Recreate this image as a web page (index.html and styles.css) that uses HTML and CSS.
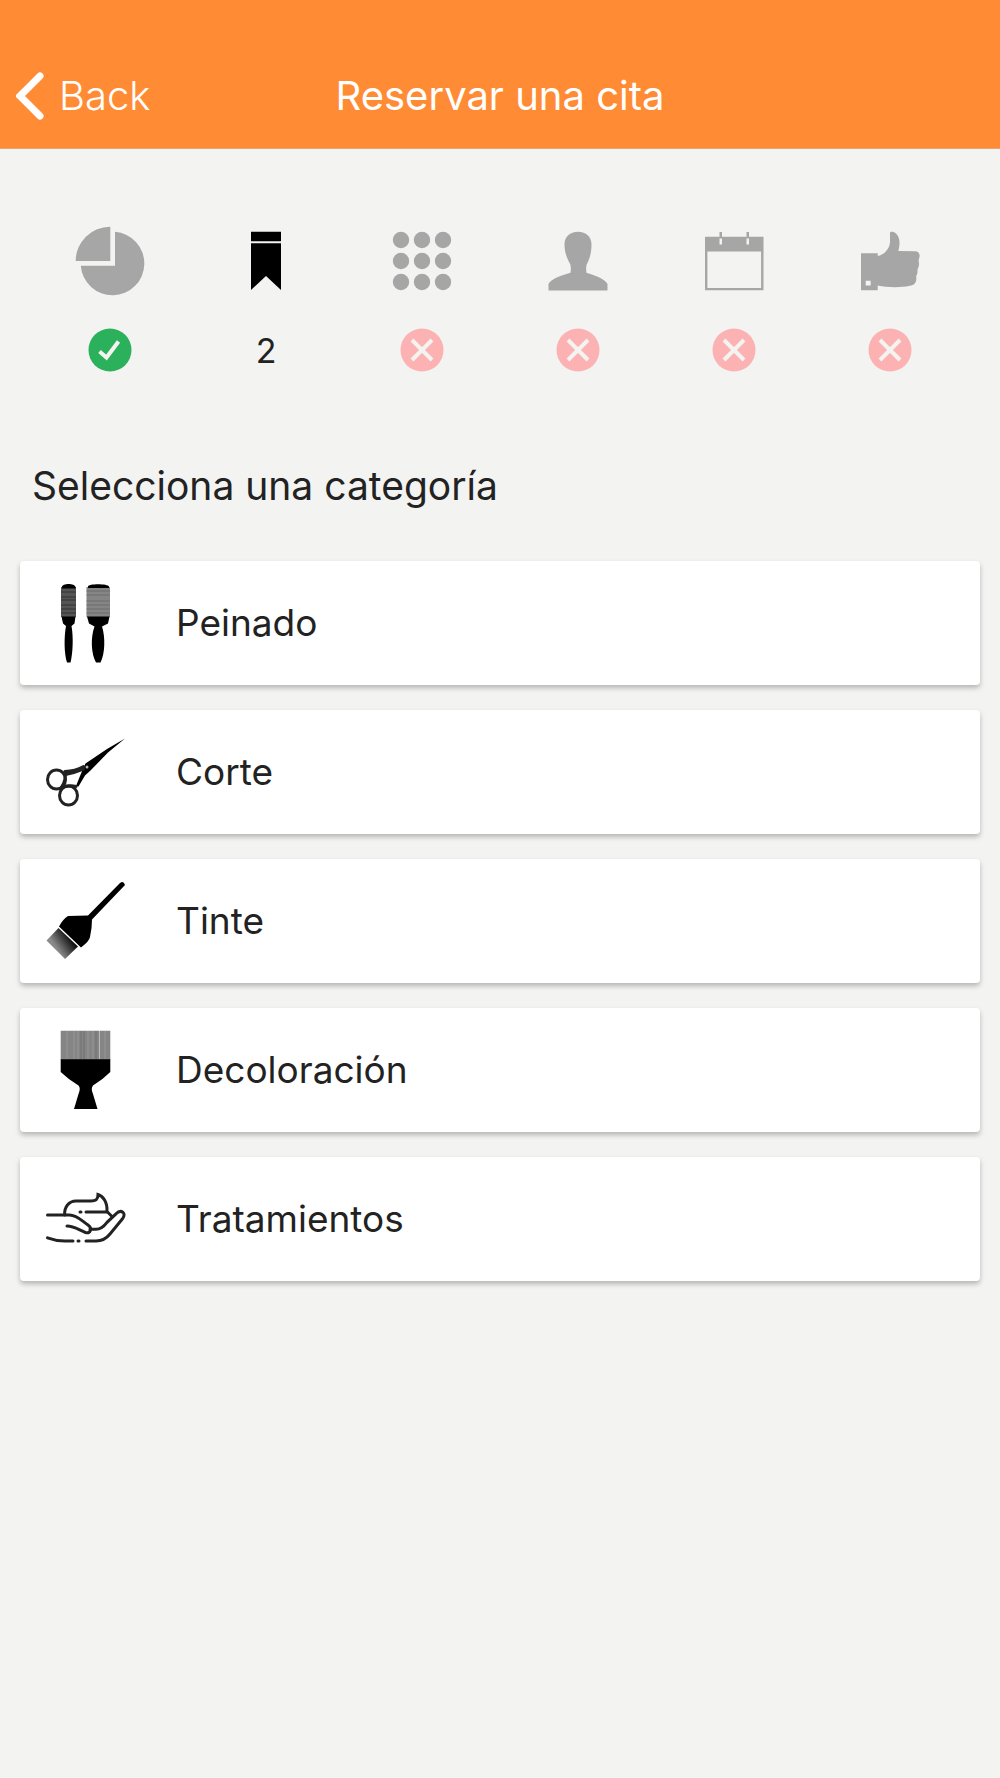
FILE: index.html
```
<!DOCTYPE html>
<html lang="es">
<head>
  <meta charset="UTF-8">
  <meta name="viewport" content="width=device-width, initial-scale=1.0">
  <title>Reservar una cita</title>
  <link rel="stylesheet" href="styles.css">
</head>
<body>
  <header class="header">
    <button class="back-button" type="button">
      <svg class="back-icon" viewBox="0 0 28 48" aria-hidden="true"><path d="M24 4 4 24l20 20"/></svg>
      Back
    </button>
    <h1>Reservar una cita</h1>
  </header>

  <main>
    <!-- Booking steps -->
    <ol class="steps">
      <li class="step">
        <svg class="step-icon" viewBox="0 0 70 70" aria-hidden="true">
          <path d="M35.300 35V.7A34.300 34.300 0 0 0 .7 35z"/>
          <path d="M40 5.800A31.800 31.800 0 1 1 5.800 39.700H40z"/>
        </svg>
        <svg class="badge badge-done" viewBox="0 0 44 44" role="img" aria-label="Completado">
          <circle cx="22" cy="22" r="21.500"/>
          <path d="M11.500 23.500 18.500 29.500 30.500 13.500"/>
        </svg>
      </li>
      <li class="step active" aria-current="step">
        <svg class="step-icon" viewBox="0 0 70 70" aria-hidden="true">
          <path d="M20 5.700h30v9.600H20zM20 17.300h30V64L35 50 20 64z"/>
        </svg>
        <span class="step-number">2</span>
      </li>
      <li class="step">
        <svg class="step-icon" viewBox="0 0 70 70" aria-hidden="true">
          <circle cx="14" cy="14" r="8.200"/><circle cx="35" cy="14" r="8.200"/><circle cx="56" cy="14" r="8.200"/>
          <circle cx="14" cy="35" r="8.200"/><circle cx="35" cy="35" r="8.200"/><circle cx="56" cy="35" r="8.200"/>
          <circle cx="14" cy="56" r="8.200"/><circle cx="35" cy="56" r="8.200"/><circle cx="56" cy="56" r="8.200"/>
        </svg>
        <svg class="badge badge-pending" viewBox="0 0 44 44" role="img" aria-label="Pendiente">
          <circle cx="22" cy="22" r="21.500"/>
          <path d="M12 12l20 20M32 12l-20 20"/>
        </svg>
      </li>
      <li class="step">
        <svg class="step-icon" viewBox="0 0 70 70" aria-hidden="true">
          <path d="M35 5.700c8 0 13.500 5 13.500 12.500 0 9-2 15-4.500 19.500-1 2-1 6.500-.5 9C54 50 62 53 64.500 58v6.500h-59V58C8 53 16 50 27.500 46.700c.5-2.500.5-7-.5-9-2.500-4.500-5.500-10.500-5.500-19.500C21.500 10.700 27 5.700 35 5.700z"/>
        </svg>
        <svg class="badge badge-pending" viewBox="0 0 44 44" role="img" aria-label="Pendiente">
          <circle cx="22" cy="22" r="21.500"/>
          <path d="M12 12l20 20M32 12l-20 20"/>
        </svg>
      </li>
      <li class="step">
        <svg class="step-icon" viewBox="0 0 70 70" aria-hidden="true">
          <path fill-rule="evenodd" d="M6 10.700h14.500V6H23v4.700h24.500V6H50v4.700h14.500v53.600H6zM8.400 25.500v36.400h53.700V25.500zM20.500 12.500v6H23v-6zM47.500 12.500v6H50v-6z"/>
        </svg>
        <svg class="badge badge-pending" viewBox="0 0 44 44" role="img" aria-label="Pendiente">
          <circle cx="22" cy="22" r="21.500"/>
          <path d="M12 12l20 20M32 12l-20 20"/>
        </svg>
      </li>
      <li class="step">
        <svg class="step-icon" viewBox="0 0 70 70" aria-hidden="true">
          <path fill-rule="evenodd" d="M6 27.300h16.700v2.500C29 29.500 35 22 35 16V7c0-2 4-1.500 6 .5 4.500 4.500 4 11 2.300 17.500L60 25.200c3.500 0 5.500 3 4.300 6.500-.6 1.500-.8 2.800-.5 4.300.7 3-.3 5.500-1.300 7.500.3 3-.3 5-1.300 6.500.8 7-2 9-6.200 9.800C45 62 32 61.500 22.700 59.500v4.800H6zM10.700 54.700v4.800h5v-4.800z"/>
        </svg>
        <svg class="badge badge-pending" viewBox="0 0 44 44" role="img" aria-label="Pendiente">
          <circle cx="22" cy="22" r="21.500"/>
          <path d="M12 12l20 20M32 12l-20 20"/>
        </svg>
      </li>
    </ol>

    <h2>Selecciona una categoría</h2>

    <!-- Categories -->
    <ul class="categories">
      <li>
        <button class="category" type="button">
          <svg class="category-icon" viewBox="0 0 80 80" aria-hidden="true">
            <path fill="#555" d="M15 4h15v30H15z"/>
            <path fill="#858585" d="M40.500 4h23.500v30H40.500z"/>
            <path d="M16 4c0-4 13-4 13.500 0v1.500H16zM42 3.500c0-3 20-3 21 0V5H42zM15.500 33.500h14l-1 7-3 2.500c2 11 1.500 27-1 36.500h-3.500c-3-9.500-3-25.500-1-36.500l-3-2.500zM41 33.500h22.500l-1.500 7-6 3c3.500 11 3 27-1.500 36H50c-5-9-5.500-25-1.500-36l-5.500-3z"/>
            <path class="thin" stroke="#333" d="M15 9h15M15 14h15M15 17h15M15 22h15M15 26h15M15 30h15"/>
            <path class="thin" stroke="#6c6c6c" d="M40.500 8H64M40.500 12H64M40.500 18H64M40.500 22H64M40.500 26H64M40.500 30H64"/>
          </svg>
          Peinado
        </button>
      </li>
      <li>
        <button class="category" type="button">
          <svg class="category-icon" viewBox="0 0 80 80" aria-hidden="true">
            <path d="M79 6.500 61 17 39.500 31.500 37 37l-3 7-4 10 2.500.5 6.500-11 5.500-5L62 20.500z"/>
            <path class="line" d="M37.500 34.500Q29 39 19 39.500M37.500 37Q29 40.500 19.500 42.500"/>
            <ellipse class="line" cx="10.500" cy="47.500" rx="9" ry="9.500"/>
            <ellipse class="line" cx="22.500" cy="63.500" rx="9" ry="9.500"/>
            <path class="line" d="M19 40q1.500 8-3.500 15M15 56q8-3.500 15-1.500"/>
            <circle cx="41" cy="35" r="1.500" fill="#bbb"/>
          </svg>
          Corte
        </button>
      </li>
      <li>
        <button class="category" type="button">
          <svg class="category-icon" viewBox="0 0 80 80" aria-hidden="true">
            <defs>
              <linearGradient id="bristles" x1="0.800" y1="0.400" x2="0.350" y2="0.700">
                <stop offset="0" stop-color="#111"/>
                <stop offset="1" stop-color="#8a8a8a"/>
              </linearGradient>
            </defs>
            <path d="M74 2q3.500-3 5 2L46 38.500q0 9-2 17.500-.5 4-9 10.500L13 45.500q4-7.500 9-10.500l20-.5z"/>
            <path fill="url(#bristles)" d="M12.500 47 .5 59.500 19 78l13-12.500z"/>
          </svg>
          Tinte
        </button>
      </li>
      <li>
        <button class="category" type="button">
          <svg class="category-icon" viewBox="0 0 80 80" aria-hidden="true">
            <path fill="#858585" d="M14.700.7h49.600V30H14.700z"/>
            <path class="thin" stroke="#979797" d="M21 1v28M28 1v28M32 1v28M42 1v28M47 1v28M59 1v28"/>
            <path class="thin" stroke="#707070" d="M35 1v28M38 1v28M50 1v28"/>
            <path stroke="#bbb" d="M53.500 1v28"/>
            <path d="M14.700 29.300h49.600V42q-8 8-17.300 13.500-2.500 3 0 8.500l4.500 15H28l4.500-15q2.500-6 0-8.500Q23 50 14.700 42z"/>
          </svg>
          Decoloración
        </button>
      </li>
      <li>
        <button class="category" type="button">
          <svg class="category-icon" viewBox="0 0 80 80" aria-hidden="true">
            <path class="line" d="M1.500 36h22C31 36 36 42 42 46c5 3.500 2 9-2.500 7.500C33 51 28 47 21 47"/>
            <path class="line" d="M18.700 36C18 28 23 22 30 22h15c5 0 7-1.500 7-6.500 5 1.500 9.500 7.500 9 17l5 5"/>
            <path class="line" d="M40 33h21M34 33h1M32 62h1"/>
            <path class="line" d="M44 50.300h6c5 0 8-3 11-7l9-8.500c5-5 11-1 6.500 5L64 55c-4 5-8 7-14 7H40M27 62h-8Q10 62 1.500 58.800"/>
          </svg>
          Tratamientos
        </button>
      </li>
    </ul>
  </main>
</body>
</html>
```
FILE: styles.css
```
:root {
  --primary-color: #ff8c34;
  --bg-color: #f3f3f1;
  --card-bg: #fff;
  --text-color: #222;
  --icon-muted: #a6a6a6;
}

* {
  box-sizing: border-box;
}

body {
  margin: 0;
  font-family: Inter, "Liberation Sans", sans-serif;
  background-color: var(--bg-color);
  color: var(--text-color);
}

button {
  font-family: inherit;
  border: none;
  cursor: pointer;
}

h1, h2 {
  margin: 0;
  font-size: 40px;
  line-height: 48px;
  font-weight: 400;
}

ol, ul {
  list-style: none;
  margin: 0;
  padding: 0;
}

/* Header */
.header {
  display: grid;
  grid-template-columns: 1fr auto 1fr;
  align-items: center;
  padding: 44px 16px 0;
  min-height: 149px;
  background-color: var(--primary-color);
  border-bottom: 1px solid #e3a779;
  color: white;
}

.back-button {
  display: flex;
  align-items: center;
  gap: 15px;
  justify-self: start;
  padding: 0;
  background: none;
  color: inherit;
  font-size: 40px;
  line-height: 48px;
  font-weight: 300;
}

.back-icon {
  width: 28px;
  height: 48px;
  fill: none;
  stroke: white;
  stroke-width: 7;
  stroke-linecap: round;
}

/* Steps */
.steps {
  display: grid;
  grid-template-columns: repeat(6, 1fr);
  padding: 77px 32px 0;
}

.step {
  display: flex;
  flex-direction: column;
  align-items: center;
  gap: 32px;
}

.step-icon {
  width: 70px;
  height: 70px;
  fill: var(--icon-muted);
}

.active .step-icon {
  fill: black;
}

.step-number {
  font-size: 34px;
  line-height: 46px;
}

.badge {
  width: 44px;
  height: 44px;
}

.badge path {
  fill: none;
  stroke: var(--bg-color);
  stroke-width: 4;
}

.badge-done circle {
  fill: #2bb05b;
}

.badge-pending circle {
  fill: #fcb2b2;
}

/* Categories */
h2 {
  padding: 88px 32px 0;
  font-size: 39px;
}

.categories {
  display: grid;
  gap: 25px;
  padding: 51px 20px 40px;
}

.category {
  display: flex;
  align-items: center;
  gap: 50px;
  width: 100%;
  padding: 22px 26px;
  border-radius: 4px;
  background-color: var(--card-bg);
  box-shadow: 0 3px 5px rgba(0, 0, 0, 0.25);
  color: inherit;
  font-size: 37px;
  line-height: 48px;
  text-align: left;
}

.category-icon {
  flex: none;
  width: 80px;
  height: 80px;
}

.category-icon .line {
  fill: none;
  stroke: #222;
  stroke-width: 3;
  stroke-linecap: round;
}

.category-icon .thin {
  stroke-width: 1;
}
```
